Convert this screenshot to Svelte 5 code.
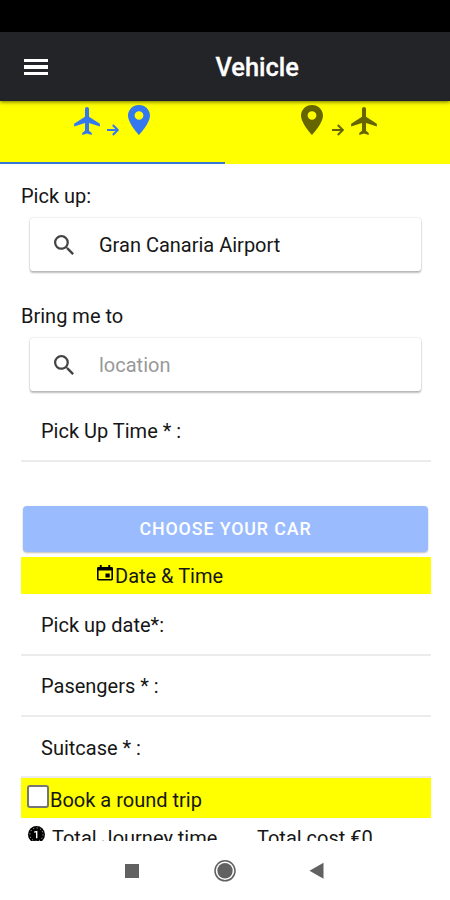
<script>
  const plane = 'M21 16v-2l-8-5V3.5c0-.83-.67-1.500-1.500-1.500S10 2.670 10 3.500V9l-8 5v2l8-2.500V19l-2 1.500V22l3.500-1 3.500 1v-1.500L13 19v-5.500l8 2.500z';
  const tabs = [
    { icons: ['plane', 'pin'], active: true },
    { icons: ['pin', 'plane'], active: false }
  ];
  let roundTrip = $state(false);
</script>

{#snippet glyph(name)}
  {#if name === 'plane'}
    <svg class="plane" viewBox="1.900 2 19.200 20" preserveAspectRatio="none"><path d={plane} /></svg>
  {:else}
    <svg class="pin" viewBox="5 2 14 20" preserveAspectRatio="none">
      <path d="M12 2C8.130 2 5 5.130 5 9c0 5.250 7 13 7 13s7-7.750 7-13c0-3.870-3.130-7-7-7zm0 9.800a2.800 2.800 0 1 1 0-5.600 2.800 2.800 0 0 1 0 5.600z" />
    </svg>
  {/if}
{/snippet}

{#snippet search(value, placeholder)}
  <div class="search">
    <svg viewBox="3 3 17.500 17.500"><path d="M15.500 14h-.790l-.280-.270A6.471 6.471 0 0 0 16 9.500 6.500 6.500 0 1 0 9.500 16c1.610 0 3.090-.590 4.230-1.570l.270.280v.790l5 4.990L20.490 19l-4.990-5zm-6 0C7.010 14 5 11.990 5 9.500S7.010 5 9.500 5 14 7.010 14 9.500 11.990 14 9.500 14z" /></svg>
    {#if value}<span>{value}</span>{:else}<span class="placeholder">{placeholder}</span>{/if}
  </div>
{/snippet}

<div class="screen">
  <div class="status"></div>
  <header>
    <button class="menu" aria-label="Menu"><i></i><i></i><i></i></button>
    <h1>Vehicle</h1>
  </header>
  <nav>
    {#each tabs as tab}
      <div class="tab" class:active={tab.active}>
        {@render glyph(tab.icons[0])}
        <svg class="arrow" viewBox="0 0 12 12"><path d="M0 6h10.500M5.800 1l5 5-5 5" /></svg>
        {@render glyph(tab.icons[1])}
      </div>
    {/each}
  </nav>

  <main>
    <div class="label">Pick up:</div>
    {@render search('Gran Canaria Airport', '')}
    <div class="label second">Bring me to</div>
    {@render search('', 'location')}
    <div class="item time">Pick Up Time * :</div>
    <button class="choose">CHOOSE YOUR CAR</button>
    <div class="band date">
      <svg viewBox="0 0 17 17"><path fill-rule="evenodd" d="M3 0h2v2h7V0h2v2h1.500Q17 2 17 3.500v11.500q0 1.500-1.500 1.500h-14Q0 16.500 0 15V3.500Q0 2 1.500 2H3zM1.700 5.800v9h13.600v-9zM9 9h4.500v4.200H9z" /></svg>
      <span>Date &amp; Time</span>
    </div>
    <div class="item first">Pick up date*:</div>
    <div class="item">Pasengers * :</div>
    <div class="item last">Suitcase * :</div>
    <label class="band trip">
      <input type="checkbox" bind:checked={roundTrip} />
      <span>Book a round trip</span>
    </label>
    <div class="totals">
      <svg viewBox="0 0 18 18">
        <circle cx="9" cy="9" r="9" />
        <circle class="ticks" cx="9" cy="9" r="7" />
        <path d="M6.500 6.500l2.700-.500v7" />
      </svg>
      <span class="journey">Total Journey time</span>
      <span>Total cost €0</span>
    </div>
  </main>

  <footer>
    <svg viewBox="0 0 450 59">
      <rect x="125" y="23" width="14" height="14" />
      <circle cx="225" cy="29.800" r="7.700" />
      <circle class="ring" cx="225" cy="29.800" r="10" />
      <path d="M309.500 29.800L323.500 21.800V37.800z" />
    </svg>
  </footer>
</div>

<style>
  :global(body) { margin: 0; background: #fff; }
  * { box-sizing: border-box; }
  .screen { width: 450px; height: 900px; display: flex; flex-direction: column; overflow: hidden; background: #fff; color: #161616; font: 400 20px/24px Roboto, sans-serif; }
  .status { height: 32px; background: #000; flex: none; }
  header { height: 69px; flex: none; background: #222428; display: flex; align-items: center; padding: 1px 0 0 23.500px; position: relative; z-index: 1; box-shadow: 0 1px 4px rgba(0, 0, 0, .55); }
  .menu { width: 24px; padding: 0; border: 0; background: none; display: flex; flex-direction: column; gap: 3px; }
  .menu i { display: block; height: 3.300px; background: #fff; }
  h1 { margin: 0 0 0 168px; font-size: 25.400px; line-height: 30px; font-weight: 500; color: #fff; -webkit-text-stroke: .3px #fff; }
  nav { height: 63px; flex: none; display: flex; background: #ff0; }
  .tab { width: 225px; padding: 4px 0 0 1px; display: flex; justify-content: center; align-items: flex-start; border-bottom: 2px solid transparent; color: #666600; }
  .tab.active { color: #3478f0; border-color: #3478d8; }
  .tab svg { fill: currentColor; }
  .plane { width: 26px; height: 28px; margin-top: 2px; }
  .pin { width: 22px; height: 30px; margin: 0 2px; }
  .tab .arrow { width: 12px; height: 12px; margin: 18.500px 7px 0; fill: none; stroke: currentColor; stroke-width: 2; }
  main { flex: none; height: 677px; padding: 0 19px 0 21px; overflow: hidden; }
  .label { margin-top: 20px; height: 24px; }
  .label.second { margin-top: 33px; }
  .search { height: 53px; margin: 10px 8px 0 9px; width: 391px; display: flex; align-items: center; padding-left: 24px; border-radius: 3px; background: #fff; box-shadow: 0 2px 2px rgba(0, 0, 0, .25), 0 0 2px rgba(0, 0, 0, .2); }
  .search svg { width: 20px; height: 20px; margin-right: 25px; fill: #444; }
  .placeholder { color: #999; }
  .item { height: 61px; padding: 18px 0 0 20px; border-bottom: 2px solid #ebebeb; }
  .item.time { height: 71px; padding-top: 28px; }
  .item.first { height: 62px; padding-top: 19px; }
  .item.last { padding-top: 19px; }
  .choose { display: block; width: 405px; height: 46px; margin: 44px 0 5px 2px; padding: 0; border: 0; border-radius: 4px; background: #9abcff; color: #fff; font: 500 17.800px/44px Roboto, sans-serif; letter-spacing: .9px; box-shadow: 0 1px 2px rgba(0, 0, 0, .25); }
  .band { background: #ff0; display: flex; }
  .date { height: 37px; padding: 7px 0 0 76px; }
  .date svg { width: 16px; height: 16px; margin: 1px 2px 0 0; }
  .trip { height: 40px; padding: 6px 0 0 6px; }
  .trip input { appearance: none; width: 22px; height: 23px; margin: 1px 1px 0 0; background: #fff; border: 2px solid #767676; border-radius: 3px; }
  .trip span { padding-top: 4px; }
  .totals { display: flex; padding: 8px 0 0 7px; }
  .totals svg { width: 17px; height: 17px; margin: 0 7px 0 0; flex: none; }
  .ticks { fill: none; stroke: #fff; stroke-width: 1; stroke-dasharray: 1 2.660; }
  .totals path { fill: none; stroke: #fff; stroke-width: 1.500; }
  .journey { width: 205px; }
  footer { height: 59px; flex: none; background: #fff; }
  footer svg { display: block; width: 450px; height: 59px; fill: #616161; }
  .ring { fill: none; stroke: #616161; stroke-width: 1.500; }
</style>
